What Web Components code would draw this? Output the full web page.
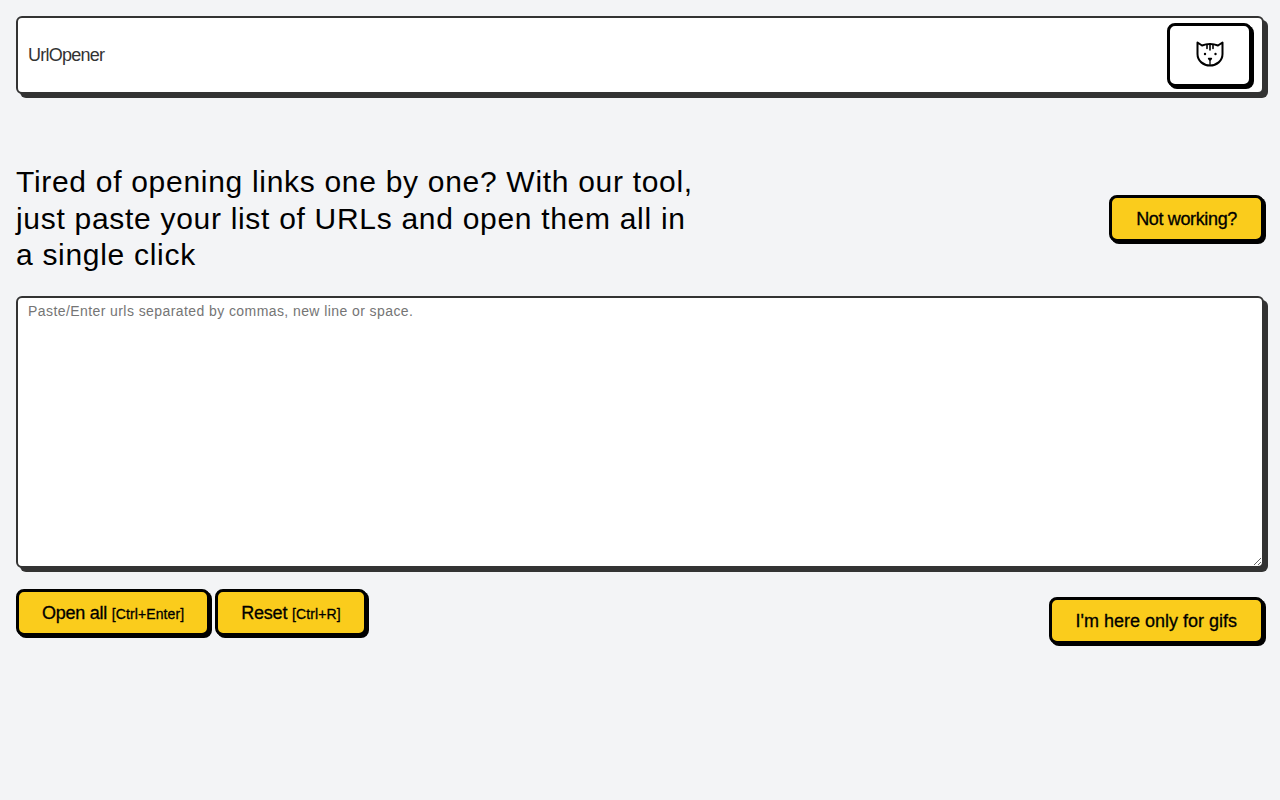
<!DOCTYPE html>
<html lang="en">
<head>
<meta charset="utf-8">
<title>UrlOpener</title>
<style>
  html, body { margin: 0; height: 100%; }
  body { background: #f3f4f6; font-family: "Liberation Sans", Arial, sans-serif; }
</style>
</head>
<body>
<url-opener-app></url-opener-app>

<script>
class YellowButton extends HTMLElement {
  constructor() {
    super();
    this.shadow = this.attachShadow({ mode: 'open' });
    this.shadow.innerHTML = /*html*/`
    <style>
      :host { display: inline-block; }
      button {
        display: block;
        box-sizing: border-box;
        height: 47px;
        margin: 0;
        padding: 1px var(--pad, 24px) 0;
        background: #facc1c;
        border: 3px solid #000;
        border-radius: 8px;
        box-shadow: 2px 2px 0 #000;
        color: #000;
        font-family: "Liberation Sans", Arial, sans-serif;
        font-size: 18px;
        font-weight: 500;
        letter-spacing: inherit;
        -webkit-text-stroke: 0.3px #000;
        white-space: nowrap;
      }
      ::slotted(small) { font-size: 14px; letter-spacing: 0.1px; }
    </style>
    <button><slot></slot></button>
    `;
  }
}

class TopNav extends HTMLElement {
  constructor() {
    super();
    this.shadow = this.attachShadow({ mode: 'open' });
    this.shadow.innerHTML = /*html*/`
    <style>
      :host { display: block; }
      nav {
        display: flex;
        align-items: center;
        justify-content: space-between;
        box-sizing: border-box;
        height: 78px;
        padding: 0 10px;
        background: #fff;
        border: 2px solid #333;
        border-radius: 6px;
        box-shadow: 4px 4px 0 #333;
      }
      .brand { color: #333; font-size: 18px; letter-spacing: -0.75px; }
      .cat {
        display: flex;
        align-items: center;
        justify-content: center;
        box-sizing: border-box;
        width: 85px;
        height: 64px;
        background: #fff;
        border: 3px solid #000;
        border-radius: 8px;
        box-shadow: 2px 2px 0 #000;
      }
      svg { display: block; width: 28px; height: 28px; }
    </style>
    <nav>
      <span class="brand">UrlOpener</span>
      <div class="cat">
        <svg viewBox="0 0 28 28" fill="none" stroke="#000" stroke-width="2" stroke-linecap="round" stroke-linejoin="round">
          <path d="M1.5 1.5 L6 4.5 Q14 1.5 22 4.5 L26.5 1.5 V13 C26.5 20 20.5 24.5 14 24.5 C7.5 24.5 1.5 20 1.5 13 Z"/>
          <path d="M11 3.5 V7.5 M14 3 V9 M17 3.5 V7.5" stroke-width="1.6"/>
          <path d="M12.5 17.5 H15.5 L14 19.5 Z M14 19.5 V23.5" stroke-width="1.3"/>
          <circle cx="9" cy="13" r="1.2" fill="#000" stroke="none"/>
          <circle cx="19.5" cy="13" r="1.2" fill="#000" stroke="none"/>
        </svg>
      </div>
    </nav>
    `;
  }
}

class UrlForm extends HTMLElement {
  constructor() {
    super();
    this.shadow = this.attachShadow({ mode: 'open' });
    this.shadow.innerHTML = /*html*/`
    <style>
      :host { display: block; }
      textarea {
        display: block;
        box-sizing: border-box;
        width: 100%;
        height: 272px;
        margin: 0;
        padding: 3px 10px;
        background: #fff;
        border: 2px solid #333;
        border-radius: 6px;
        box-shadow: 4px 4px 0 #333;
        outline: none;
        font-family: "Liberation Sans", Arial, sans-serif;
        font-size: 14px;
        line-height: 20px;
        letter-spacing: 0.42px;
      }
      textarea::placeholder { color: #757575; opacity: 1; }
      .actions {
        display: flex;
        justify-content: space-between;
        margin-top: 21px;
      }
      .left { display: flex; gap: 5px; --pad: 23px; }
      .right { margin-top: 8px; }
    </style>
    <textarea placeholder="Paste/Enter urls separated by commas, new line or space."></textarea>
    <div class="actions">
      <div class="left">
        <yellow-button style="letter-spacing:-0.25px">Open all <small>[Ctrl+Enter]</small></yellow-button>
        <yellow-button style="letter-spacing:-0.2px">Reset <small>[Ctrl+R]</small></yellow-button>
      </div>
      <div class="right">
        <yellow-button>I'm here only for gifs</yellow-button>
      </div>
    </div>
    `;
  }
}

class UrlOpenerApp extends HTMLElement {
  constructor() {
    super();
    this.shadow = this.attachShadow({ mode: 'open' });
    this.shadow.innerHTML = /*html*/`
    <style>
      :host { display: block; padding: 16px; }
      .intro {
        display: flex;
        align-items: center;
        justify-content: space-between;
        margin: 70px 0 22.5px;
      }
      h1 {
        width: 685px;
        margin: 0;
        color: #000;
        font-size: 30px;
        font-weight: 400;
        line-height: 36.5px;
        letter-spacing: 0.7px;
      }
    </style>
    <top-nav></top-nav>
    <div class="intro">
      <h1>Tired of opening links one by one? With our tool, just paste your list of URLs and open them all in a single click</h1>
      <yellow-button style="letter-spacing:-0.35px">Not working?</yellow-button>
    </div>
    <url-form></url-form>
    `;
  }
}

customElements.define('yellow-button', YellowButton);
customElements.define('top-nav', TopNav);
customElements.define('url-form', UrlForm);
customElements.define('url-opener-app', UrlOpenerApp);
</script>
</body>
</html>
